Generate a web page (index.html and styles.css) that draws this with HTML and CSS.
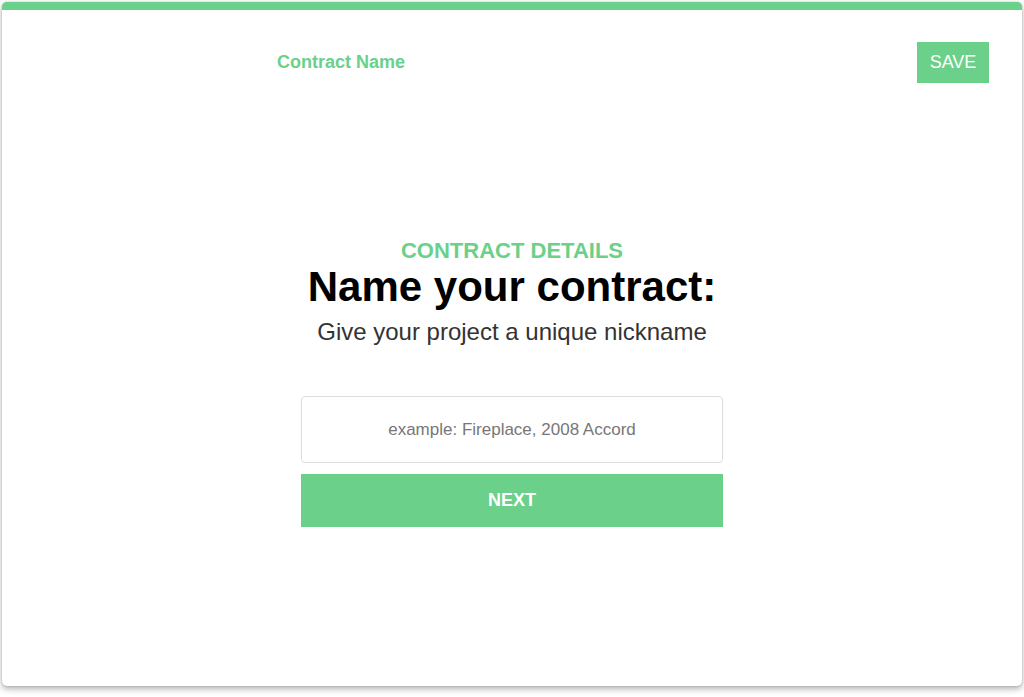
FILE: index.html
```html
<!DOCTYPE html>
<html>
<head>
<meta charset="utf-8">
<link rel="stylesheet" href="styles.css">
</head>
<body>
<div class="card">
  <header class="topbar">
    <div class="title">Contract Name</div>
    <button class="save">SAVE</button>
  </header>
  <main class="content">
    <div class="eyebrow">CONTRACT DETAILS</div>
    <h1 class="heading">Name your contract:</h1>
    <p class="sub">Give your project a unique nickname</p>
    <form class="form">
      <input class="field" type="text" placeholder="example: Fireplace, 2008 Accord">
      <button class="next" type="button">NEXT</button>
    </form>
  </main>
</div>
</body>
</html>
```
FILE: styles.css
```css
html, body {
  margin: 0;
  padding: 0;
  background: #ffffff;
}
body {
  padding: 2px 2px 11px 2px;
  font-family: "Liberation Sans", Arial, sans-serif;
}
.card {
  height: 676px;
  background: #fff;
  border-top: 8px solid #6bd089;
  border-radius: 5px;
  box-shadow: 0 3px 6px rgba(0,0,0,0.3), 0 0 2px rgba(0,0,0,0.2);
  display: flex;
  flex-direction: column;
}
.topbar {
  display: flex;
  align-items: center;
  justify-content: space-between;
  padding: 32px 33px 0 275px;
}
.title {
  color: #6bd089;
  font-weight: bold;
  font-size: 18px;
}
.save {
  background: #6bd089;
  color: #fff;
  border: 0;
  width: 72px;
  height: 41px;
  font-family: "Liberation Sans", Arial, sans-serif;
  font-size: 18px;
  padding: 0;
}
.content {
  display: flex;
  flex-direction: column;
  align-items: center;
  padding-top: 157px;
}
.eyebrow {
  color: #6bd089;
  font-weight: bold;
  font-size: 22px;
  line-height: 22px;
}
.heading {
  margin: 3px 0 0 0;
  font-size: 42px;
  line-height: 44px;
  color: #000;
}
.sub {
  margin: 9px 0 0 0;
  font-size: 24px;
  line-height: 28px;
  color: #333;
}
.form {
  margin-top: 50px;
  width: 422px;
  display: flex;
  flex-direction: column;
  gap: 11px;
}
.field {
  box-sizing: border-box;
  height: 67px;
  border: 1px solid #dddddd;
  border-radius: 4px;
  text-align: center;
  font-family: "Liberation Sans", Arial, sans-serif;
  font-size: 17px;
  padding: 0;
}
.field::placeholder {
  color: #777;
}
.next {
  height: 53px;
  border: 0;
  background: #6bd089;
  color: #fff;
  font-weight: bold;
  font-size: 18px;
  font-family: "Liberation Sans", Arial, sans-serif;
}
```
